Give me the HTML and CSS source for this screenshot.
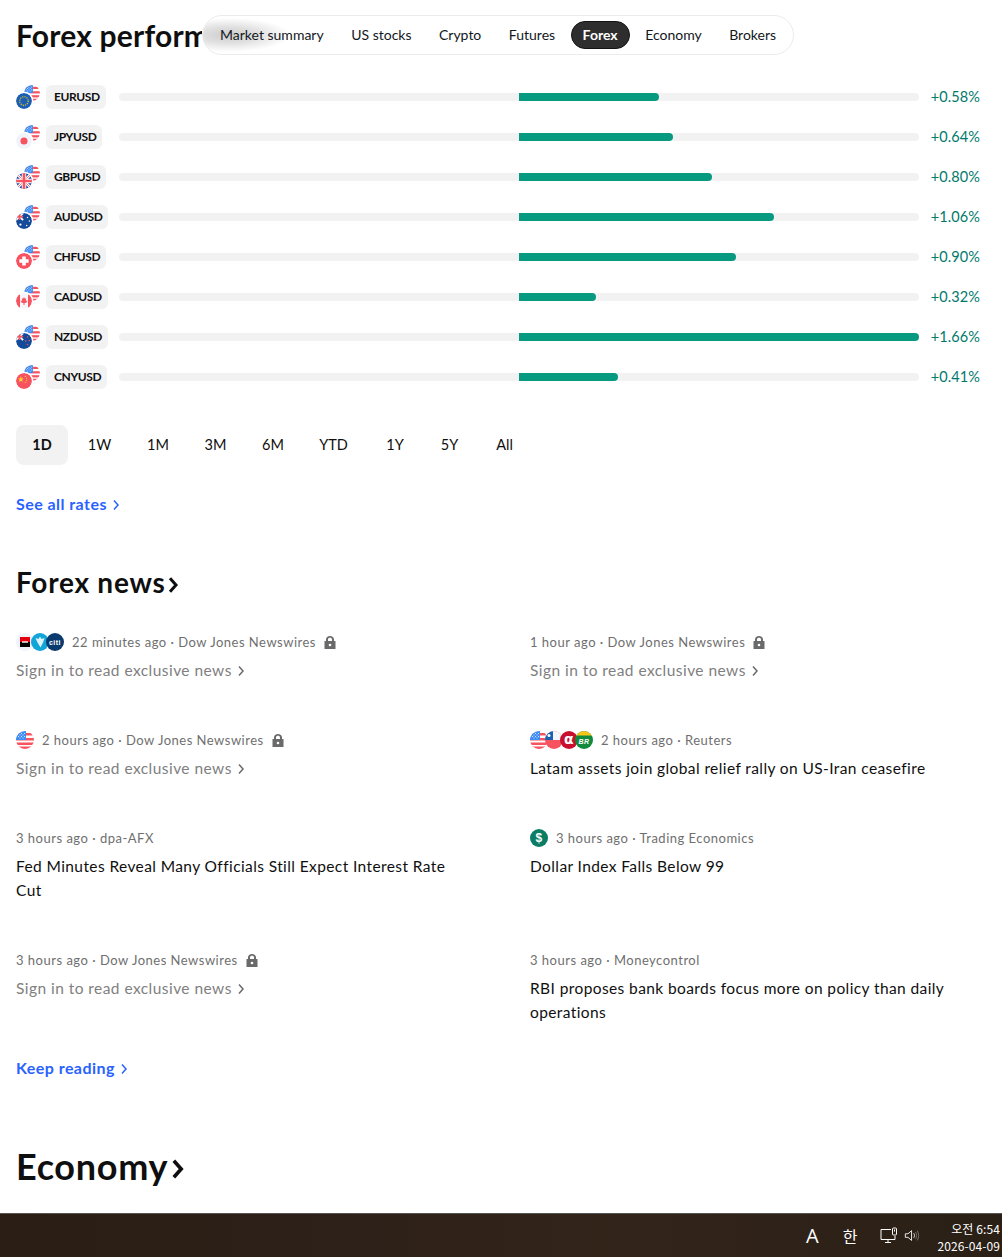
FILE: index.html
```html
<!DOCTYPE html>
<html lang="en">
<head>
<meta charset="utf-8">
<title>Forex performance</title>
<link rel="stylesheet" href="styles.css">
</head>
<body>
<svg class="defs" width="0" height="0" aria-hidden="true">
  <defs>
    <clipPath id="c"><circle cx="9" cy="9" r="9"/></clipPath>
    <symbol id="us" viewBox="0 0 18 18"><g clip-path="url(#c)"><rect width="18" height="18" fill="#fff"/><rect y="2" width="18" height="2.5" fill="#f7525f"/><rect y="7" width="18" height="2.5" fill="#f7525f"/><rect y="11.5" width="18" height="2.5" fill="#f7525f"/><rect y="15.5" width="18" height="3" fill="#f7525f"/><rect width="10" height="9" fill="#3d8df5"/><g fill="#cfe2ff"><rect x="2" y="2" width="1" height="1"/><rect x="5" y="2" width="1" height="1"/><rect x="8" y="2" width="1" height="1"/><rect x="2" y="5" width="1" height="1"/><rect x="5" y="5" width="1" height="1"/><rect x="8" y="5" width="1" height="1"/><rect x="3.500" y="3.500" width="1" height="1"/><rect x="6.500" y="3.500" width="1" height="1"/><rect x="3.500" y="6.500" width="1" height="1"/><rect x="6.500" y="6.500" width="1" height="1"/></g></g></symbol>
    <symbol id="eu" viewBox="0 0 18 18"><circle cx="9" cy="9" r="9" fill="#1b5fb4"/><circle cx="9" cy="9" r="4.800" fill="none" stroke="#f5c518" stroke-width="1.400" stroke-dasharray="1.300 1.200"/></symbol>
    <symbol id="jp" viewBox="0 0 18 18"><circle cx="9" cy="9" r="9" fill="#f0f3fa"/><circle cx="9" cy="9" r="4" fill="#f7525f"/></symbol>
    <symbol id="gb" viewBox="0 0 18 18"><g clip-path="url(#c)"><rect width="18" height="18" fill="#1e4f9e"/><path d="M0 0L18 18M18 0L0 18" stroke="#fff" stroke-width="3"/><path d="M0 0L18 18M18 0L0 18" stroke="#f7525f" stroke-width="1"/><path d="M9 0V18M0 9H18" stroke="#fff" stroke-width="5"/><path d="M9 0V18M0 9H18" stroke="#f7525f" stroke-width="3"/></g></symbol>
    <symbol id="au" viewBox="0 0 18 18"><g clip-path="url(#c)"><rect width="18" height="18" fill="#134a9a"/><path d="M0 0L8 8M8 0L0 8" stroke="#fff" stroke-width="2"/><path d="M4 0V8M0 4H8" stroke="#f7525f" stroke-width="2"/><g fill="#fff"><circle cx="5" cy="13" r="1.300"/><circle cx="13" cy="5" r=".8"/><circle cx="15" cy="9" r=".8"/><circle cx="12" cy="14" r=".8"/></g></g></symbol>
    <symbol id="nz" viewBox="0 0 18 18"><g clip-path="url(#c)"><rect width="18" height="18" fill="#134a9a"/><path d="M0 0L8 8M8 0L0 8" stroke="#fff" stroke-width="2"/><path d="M4 0V8M0 4H8" stroke="#f7525f" stroke-width="2"/><g fill="#f7525f"><circle cx="13" cy="4.500" r=".9"/><circle cx="15" cy="8.500" r=".9"/><circle cx="11" cy="9" r=".9"/><circle cx="13" cy="13" r=".9"/></g></g></symbol>
    <symbol id="ch" viewBox="0 0 18 18"><circle cx="9" cy="9" r="9" fill="#f7525f"/><path d="M7 3.800H11V7H14.200V11H11V14.200H7V11H3.800V7H7Z" fill="#fff"/></symbol>
    <symbol id="ca" viewBox="0 0 18 18"><g clip-path="url(#c)"><rect width="18" height="18" fill="#f5f6fb"/><rect width="4.500" height="18" fill="#f7525f"/><rect x="13.500" width="4.500" height="18" fill="#f7525f"/><path d="M9 4.500L10 6.500L11.500 6L11 9L12.800 8.500L12.300 10.500L9.500 11.500V13.500H8.500V11.500L5.700 10.500L5.200 8.500L7 9L6.500 6L8 6.500Z" fill="#f7525f"/></g></symbol>
    <symbol id="cn" viewBox="0 0 18 18"><circle cx="9" cy="9" r="9" fill="#f7525f"/><g fill="#fdd835"><path d="M5.500 3.500L6.400 6.100L8.900 6.100L6.900 7.700L7.600 10.200L5.500 8.700L3.400 10.200L4.100 7.700L2.100 6.100L4.600 6.100Z"/><circle cx="10.500" cy="3.800" r=".7"/><circle cx="12" cy="6" r=".7"/><circle cx="12" cy="8.500" r=".7"/><circle cx="10.500" cy="10.500" r=".7"/></g></symbol>
    <symbol id="lock" viewBox="0 0 14 14"><path d="M3 6V4.500C3 2.300 4.800 1 7 1S11 2.300 11 4.500V6H12.500V14H1.500V6ZM5 6H9V4.500C9 3.300 8.100 2.800 7 2.800S5 3.300 5 4.500Z" fill="#6a6a6a" fill-rule="evenodd"/><circle cx="7" cy="10" r="1.300" fill="#fff"/></symbol>
    <symbol id="chev" viewBox="0 0 8 12"><path d="M2 1.500L6 6L2 10.500" fill="none" stroke="currentColor"/></symbol>
  </defs>
</svg>

<div class="screen">
  <main class="page">
    <section class="perf">
      <header class="perf-head">
        <div class="title-clip"><h2 class="h-perf">Forex performance</h2></div>
        <nav class="tabs">
          <span class="fade" aria-hidden="true"></span>
          <a class="tab">Market summary</a>
          <a class="tab">US stocks</a>
          <a class="tab">Crypto</a>
          <a class="tab">Futures</a>
          <a class="tab tab-on">Forex</a>
          <a class="tab">Economy</a>
          <a class="tab">Brokers</a>
        </nav>
      </header>

      <ul class="rows">
        <li class="row"><span class="pair"><span class="flags"><svg class="fl fl-b"><use href="#us"/></svg><svg class="fl fl-a"><use href="#eu"/></svg></span><span class="chip">EURUSD</span></span><span class="track"><span class="half"><span class="fill" style="width:35%"></span></span></span><span class="val">+0.58%</span></li>
        <li class="row"><span class="pair"><span class="flags"><svg class="fl fl-b"><use href="#us"/></svg><svg class="fl fl-a"><use href="#jp"/></svg></span><span class="chip">JPYUSD</span></span><span class="track"><span class="half"><span class="fill" style="width:38.5%"></span></span></span><span class="val">+0.64%</span></li>
        <li class="row"><span class="pair"><span class="flags"><svg class="fl fl-b"><use href="#us"/></svg><svg class="fl fl-a"><use href="#gb"/></svg></span><span class="chip">GBPUSD</span></span><span class="track"><span class="half"><span class="fill" style="width:48.25%"></span></span></span><span class="val">+0.80%</span></li>
        <li class="row"><span class="pair"><span class="flags"><svg class="fl fl-b"><use href="#us"/></svg><svg class="fl fl-a"><use href="#au"/></svg></span><span class="chip">AUDUSD</span></span><span class="track"><span class="half"><span class="fill" style="width:63.75%"></span></span></span><span class="val">+1.06%</span></li>
        <li class="row"><span class="pair"><span class="flags"><svg class="fl fl-b"><use href="#us"/></svg><svg class="fl fl-a"><use href="#ch"/></svg></span><span class="chip">CHFUSD</span></span><span class="track"><span class="half"><span class="fill" style="width:54.25%"></span></span></span><span class="val">+0.90%</span></li>
        <li class="row"><span class="pair"><span class="flags"><svg class="fl fl-b"><use href="#us"/></svg><svg class="fl fl-a"><use href="#ca"/></svg></span><span class="chip">CADUSD</span></span><span class="track"><span class="half"><span class="fill" style="width:19.25%"></span></span></span><span class="val">+0.32%</span></li>
        <li class="row"><span class="pair"><span class="flags"><svg class="fl fl-b"><use href="#us"/></svg><svg class="fl fl-a"><use href="#nz"/></svg></span><span class="chip">NZDUSD</span></span><span class="track"><span class="half"><span class="fill" style="width:100%"></span></span></span><span class="val">+1.66%</span></li>
        <li class="row"><span class="pair"><span class="flags"><svg class="fl fl-b"><use href="#us"/></svg><svg class="fl fl-a"><use href="#cn"/></svg></span><span class="chip">CNYUSD</span></span><span class="track"><span class="half"><span class="fill" style="width:24.75%"></span></span></span><span class="val">+0.41%</span></li>
      </ul>

      <div class="ranges">
        <a class="range range-on">1D</a><a class="range r-1w">1W</a><a class="range r-1m">1M</a><a class="range r-3m">3M</a><a class="range r-6m">6M</a><a class="range r-ytd">YTD</a><a class="range r-1y">1Y</a><a class="range r-5y">5Y</a><a class="range r-all">All</a>
      </div>

      <a class="more more-rates">See all rates <svg class="chev-s"><use href="#chev"/></svg></a>
    </section>

    <section class="news">
      <h2 class="h-news">Forex news<svg class="chev-h"><use href="#chev"/></svg></h2>
      <div class="news-grid">
        <article class="item">
          <div class="meta"><span class="logos">
            <svg class="lg" viewBox="0 0 18 18"><circle cx="9" cy="9" r="9" fill="#f0f3fa"/><rect x="4" y="4" width="10" height="5" fill="#e3000f"/><rect x="4" y="9" width="10" height="5" fill="#000"/><rect x="6" y="8.300" width="6" height="1.400" fill="#fff"/></svg>
            <svg class="lg" viewBox="0 0 18 18"><circle cx="9" cy="9" r="9" fill="#12a5d8"/><path d="M9 3.500L10.500 6L13.500 5L12 9.500L9.500 14.500L6.500 9.500L4.500 5L7.500 6Z" fill="#dff3fb"/></svg>
            <svg class="lg" viewBox="0 0 18 18"><circle cx="9" cy="9" r="9" fill="#0b3a6f"/><text x="9" y="11.500" class="citi">citi</text></svg>
          </span><span>22 minutes ago · Dow Jones Newswires</span><svg class="lock"><use href="#lock"/></svg></div>
          <a class="signin">Sign in to read exclusive news <svg class="chev-g"><use href="#chev"/></svg></a>
        </article>
        <article class="item">
          <div class="meta"><span>1 hour ago · Dow Jones Newswires</span><svg class="lock"><use href="#lock"/></svg></div>
          <a class="signin">Sign in to read exclusive news <svg class="chev-g"><use href="#chev"/></svg></a>
        </article>
        <article class="item">
          <div class="meta"><span class="logos"><svg class="lg"><use href="#us"/></svg></span><span>2 hours ago · Dow Jones Newswires</span><svg class="lock"><use href="#lock"/></svg></div>
          <a class="signin">Sign in to read exclusive news <svg class="chev-g"><use href="#chev"/></svg></a>
        </article>
        <article class="item">
          <div class="meta"><span class="logos">
            <svg class="lg"><use href="#us"/></svg>
            <svg class="lg" viewBox="0 0 18 18"><g clip-path="url(#c)"><rect width="18" height="18" fill="#f7525f"/><rect width="18" height="9" fill="#f5f6fb"/><rect width="8" height="9" fill="#1b5fb4"/><circle cx="4" cy="4.500" r="1.500" fill="#fff"/></g></svg>
            <svg class="lg" viewBox="0 0 18 18"><circle cx="9" cy="9" r="9" fill="#c8102e"/><text x="9" y="13" class="alpha">α</text></svg>
            <svg class="lg" viewBox="0 0 18 18"><g clip-path="url(#c)"><rect width="18" height="18" fill="#118a3c"/><rect width="18" height="4.500" fill="#f5c518"/></g><text x="9" y="12.500" class="br">BR</text></svg>
          </span><span>2 hours ago · Reuters</span></div>
          <a class="headline">Latam assets join global relief rally on US-Iran ceasefire</a>
        </article>
        <article class="item">
          <div class="meta"><span>3 hours ago · dpa-AFX</span></div>
          <a class="headline">Fed Minutes Reveal Many Officials Still Expect Interest Rate Cut</a>
        </article>
        <article class="item">
          <div class="meta"><span class="logos"><svg class="lg" viewBox="0 0 18 18"><circle cx="9" cy="9" r="9" fill="#0a7d65"/><text x="9" y="13.200" class="dollar">$</text></svg></span><span>3 hours ago · Trading Economics</span></div>
          <a class="headline">Dollar Index Falls Below 99</a>
        </article>
        <article class="item">
          <div class="meta"><span>3 hours ago · Dow Jones Newswires</span><svg class="lock"><use href="#lock"/></svg></div>
          <a class="signin">Sign in to read exclusive news <svg class="chev-g"><use href="#chev"/></svg></a>
        </article>
        <article class="item">
          <div class="meta"><span>3 hours ago · Moneycontrol</span></div>
          <a class="headline">RBI proposes bank boards focus more on policy than daily operations</a>
        </article>
      </div>
      <a class="more more-news">Keep reading <svg class="chev-s"><use href="#chev"/></svg></a>
    </section>

    <h2 class="h-eco">Economy<svg class="chev-e"><use href="#chev"/></svg></h2>
  </main>

  <footer class="taskbar">
    <span class="tb-a">A</span>
    <span class="tb-han">한</span>
    <svg class="tb-net" viewBox="0 0 18 18"><path d="M11 2.500H1V12.500H15V9M5 15.500H11M8 12.500V15.500" fill="none" stroke="#fff" stroke-width="1"/><rect x="12.500" y="1" width="4" height="7" rx="1" fill="none" stroke="#fff"/><rect x="14" y="2.500" width="1" height="2" fill="#fff"/></svg>
    <svg class="tb-vol" viewBox="0 0 18 18"><path d="M1.500 6.500H4.500L8.500 3V14L4.500 10.500H1.500Z" fill="none" stroke="#fff"/><path d="M11 6C12 7.500 12 9.500 11 11" fill="none" stroke="#fff"/><path d="M13 4.500C14.500 7 14.500 10 13 12.500M15 3C17 6.500 17 10.500 15 14" fill="none" stroke="#777"/></svg>
    <div class="clock"><span>오전 6:54</span><span>2026-04-09</span></div>
  </footer>
</div>
</body>
</html>
```

FILE: styles.css
```css
* { box-sizing: border-box; }
html, body { margin: 0; padding: 0; background: #fff; }
body { font-family: "Lato", "Noto Sans", sans-serif; color: #131722; }
.defs { position: absolute; }
.screen { width: 1002px; height: 1257px; overflow: hidden; display: flex; flex-direction: column; }
.page { flex: 1; min-height: 0; overflow: hidden; padding: 15px 22px 0 16px; }
a { color: inherit; text-decoration: none; }
h2 { margin: 0; color: #0f0f0f; font-weight: 700; }

.perf-head { display: flex; height: 40px; position: relative; }
.title-clip { width: 186px; overflow: hidden; white-space: nowrap; flex: none; }
.h-perf { font-size: 30px; line-height: 40px; letter-spacing: .2px; }
.tabs { display: flex; align-items: center; gap: 3.500px; padding: 0 5px; height: 40px; border: 1px solid #ececec; border-radius: 20px; background: #fff; position: relative; overflow: hidden; }
.fade { position: absolute; left: 0; top: 2px; width: 100px; height: 34px; background: radial-gradient(ellipse 62% 50% at 26% 50%, #cdcdcd 0, rgba(215,215,215,.8) 45%, rgba(255,255,255,0) 100%); }
.tab { position: relative; height: 28px; padding: 0 11px; line-height: 26px; font-size: 14px; color: #131722; white-space: nowrap; border-radius: 14px; border: 1px solid transparent; }
.tab-on { background: #2e2e2e; border-color: #131313; color: #fff; font-weight: 700; }

.rows { list-style: none; margin: 30px 0 0; padding: 0; }
.row { display: grid; grid-template-columns: 103px 800px 61px; height: 40px; align-items: start; }
.pair { display: flex; align-items: center; gap: 6px; height: 24px; }
.flags { position: relative; width: 24px; height: 24px; flex: none; }
.fl { position: absolute; width: 16px; height: 16px; border-radius: 50%; }
.fl-b { right: 0; top: 0; }
.fl-a { left: 0; bottom: 0; background: #fff; box-shadow: 0 0 0 1.500px #fff; }
.chip { height: 24px; padding: 0 6px 0 8px; line-height: 24px; background: #f2f2f2; border-radius: 6px; font-size: 12px; font-weight: 700; letter-spacing: -.4px; color: #0f0f0f; }
.track { display: flex; justify-content: flex-end; height: 8px; margin-top: 8px; background: #f2f2f2; border-radius: 4px; }
.half { width: 400px; height: 8px; display: block; }
.fill { display: block; height: 8px; background: #089981; border-radius: 0 4px 4px 0; }
.val { justify-self: end; font-size: 14.500px; line-height: 24px; letter-spacing: .1px; color: #00796b; }

.ranges { display: flex; margin-top: 20px; height: 40px; }
.range { height: 40px; line-height: 40px; font-size: 14.500px; color: #0f0f0f; text-align: center; }
.range-on { width: 52px; background: #f2f2f2; border-radius: 8px; font-weight: 700; }
.r-1w { width: 63px; }
.r-1m { width: 54px; }
.r-3m { width: 61px; }
.r-6m { width: 54px; }
.r-ytd { width: 67px; }
.r-1y { width: 56px; }
.r-5y { width: 53px; }
.r-all { width: 57px; }

.more { display: inline-flex; align-items: center; gap: 5px; font-size: 16px; font-weight: 700; letter-spacing: .45px; color: #2962ff; line-height: 20px; }
.more-rates { margin-top: 29px; display: flex; }
.chev-s { width: 8px; height: 12px; margin-top: 2px; stroke-width: 1.500px; }

.news { margin-top: 48px; }
.h-news { display: flex; align-items: center; font-size: 28px; line-height: 40px; letter-spacing: .75px; height: 40px; }
.chev-h { width: 12px; height: 18px; margin: 5px 0 0 1px; stroke-width: 2px; }
.news-grid { display: grid; grid-template-columns: 450px 450px; column-gap: 64px; margin-top: 28px; }
.item { height: 98px; }
.item:nth-child(n+5):nth-child(-n+6) { height: 122px; }
.meta { display: flex; align-items: center; gap: 5px; height: 24px; font-size: 13px; letter-spacing: .5px; color: #6f6f6f; white-space: nowrap; }
.logos { display: flex; margin-right: 3px; }
.lg { width: 18px; height: 18px; display: block; }
.lg + .lg { margin-left: -3px; }
.lock { width: 14px; height: 14px; margin-left: 2px; }
.signin { display: flex; align-items: center; gap: 5px; font-size: 15.500px; line-height: 24px; letter-spacing: .45px; color: #808080; margin-top: 4px; }
.chev-g { width: 8px; height: 12px; color: #6a6a6a; margin-top: 2px; stroke-width: 1.500px; }
.headline { display: block; font-size: 15.500px; line-height: 24px; letter-spacing: .4px; color: #0f0f0f; margin-top: 4px; }
.citi { font: 700 7px "Liberation Sans", sans-serif; fill: #fff; text-anchor: middle; }
.br { font: italic 700 7px "Liberation Sans", sans-serif; fill: #fff; text-anchor: middle; }
.alpha { font: 700 14px "DejaVu Sans", sans-serif; fill: #fff; text-anchor: middle; }
.dollar { font: 700 12px "Liberation Sans", sans-serif; fill: #fff; text-anchor: middle; }
.more-news { margin-top: 12px; display: flex; }

.h-eco { display: flex; align-items: center; margin-top: 66px; font-size: 36px; line-height: 44px; letter-spacing: .7px; }
.chev-e { width: 15px; height: 22px; margin: 6px 0 0 2px; stroke-width: 2px; }

.taskbar { flex: none; height: 44px; display: flex; align-items: center; justify-content: flex-end; padding-right: 2px; background: linear-gradient(90deg, #2b1e14, #2c2018 30%, #33241a 60%, #2a2016); border-top: 1px solid #555; color: #fff; font-family: "Noto Sans CJK KR", "Noto Sans", sans-serif; }
.tb-a { font-size: 20px; font-family: "Open Sans", sans-serif; margin-right: 24px; }
.tb-han { font-size: 16px; margin-right: 23px; }
.tb-net { width: 18px; height: 18px; margin-right: 6px; }
.tb-vol { width: 16px; height: 16px; margin-right: 17px; }
.clock { display: flex; flex-direction: column; align-items: flex-end; padding-top: 3px; font-size: 12px; line-height: 17px; letter-spacing: .1px; }
```
